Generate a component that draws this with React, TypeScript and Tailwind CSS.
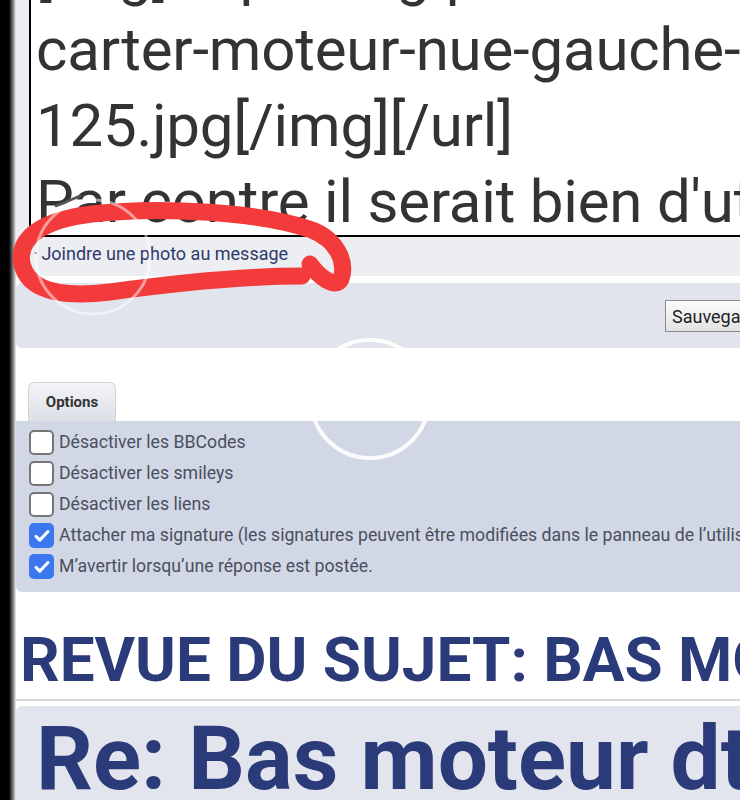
import React from "react";

const options = [
  { label: "Désactiver les BBCodes", checked: false },
  { label: "Désactiver les smileys", checked: false },
  { label: "Désactiver les liens", checked: false },
  {
    label:
      "Attacher ma signature (les signatures peuvent être modifiées dans le panneau de l’utilisateur)",
    checked: true,
  },
  { label: "M’avertir lorsqu’une réponse est postée.", checked: true },
];

function Checkbox({ checked }: { checked: boolean }) {
  if (checked) {
    return (
      <span className="flex h-[25px] w-[25px] shrink-0 items-center justify-center rounded-[5px] bg-[#3b78ef]">
        <svg width="18" height="18" viewBox="0 0 24 24" fill="none">
          <path d="M4 12.5l5 5L20 6" stroke="white" strokeWidth="4" strokeLinecap="round" strokeLinejoin="round" />
        </svg>
      </span>
    );
  }
  return <span className="h-[25px] w-[25px] shrink-0 rounded-[5px] border-2 border-[#767676] bg-white" />;
}

export default function App() {
  return (
    <div className="relative flex h-[800px] w-[740px] overflow-hidden bg-white font-['Roboto',sans-serif]">
      {/* phone edge shadow */}
      <div className="w-[16px] shrink-0 bg-gradient-to-r from-black from-50% to-[#eceef2]" />

      <div className="min-w-0 flex-1">
        {/* message editor */}
        <div className="rounded-bl-md bg-[#eceef2] pl-[13px]">
          <div className="h-[237px] overflow-hidden border-b-2 border-l-2 border-black bg-white pl-[5px] text-[60px] leading-[76px] tracking-[-0.2px] whitespace-nowrap text-[#333]">
            <div className="mt-[-64px]">
              <div>[img]http://img.pieces-dt.fr/upload/</div>
              <div>carter-moteur-nue-gauche-</div>
              <div>125.jpg[/img][/url]</div>
              <div>Par contre il serait bien d'utiliser</div>
            </div>
          </div>
          <div className="flex h-[39px] items-center gap-[4px] pb-[6px] pl-[5px] text-[18px] text-[#2e3a6c]">
            <span className="text-[10px]">•</span>
            <span>Joindre une photo au message</span>
          </div>
        </div>

        <div className="h-[7px]" />

        <div className="h-[65px] rounded-l-md bg-[#e1e4ec] pt-[17px] pl-[649px]">
          <button className="h-[32px] border border-[#8a8a8a] bg-gradient-to-b from-[#fbfbfb] to-[#e3e3e3] pl-[6px] pr-[8px] text-left text-[18px] whitespace-nowrap text-[#222]">
            Sauvegarder
          </button>
        </div>

        <div className="h-[34px]" />

        {/* options tab */}
        <div className="ml-[12px] flex h-[39px] w-[88px] items-center justify-center rounded-t-md border border-b-0 border-[#cfd3dc] bg-gradient-to-b from-[#f4f5f8] to-[#dcdfe7] pt-[1px] text-[15px] font-bold text-[#333]">
          Options
        </div>
        <div className="flex h-[171px] flex-col gap-[6px] rounded-bl-md bg-[#d1d7e5] pt-[9px] pl-[13px]">
          {options.map((o) => (
            <div key={o.label} className="flex items-center gap-[5px] whitespace-nowrap text-[17.7px] leading-[25px] text-[#4a4f5e]">
              <Checkbox checked={o.checked} />
              <span>{o.label}</span>
            </div>
          ))}
        </div>

        {/* topic review */}
        <h2 className="mt-[32px] ml-[4px] text-[62px] leading-[72px] font-bold whitespace-nowrap text-[#2b3a78]">
          REVUE DU SUJET: BAS MOTEUR DT 125
        </h2>
        <div className="mt-[3px] h-[2px] bg-[#d6d8dd]" />
        <div className="mt-[5px] h-[120px] rounded-tl-md bg-[#e2e5ee] pl-[20px]">
          <div className="pt-[3px] text-[89px] leading-[100px] font-bold whitespace-nowrap text-[#2b3a78]">
            Re: Bas moteur dt 125
          </div>
        </div>
      </div>

      {/* annotation + touch indicators */}
      <svg className="pointer-events-none absolute inset-0" width="740" height="800" viewBox="0 0 740 800" fill="none">
        <path d="M56 206 L80 196" stroke="#555" strokeWidth="2.5" strokeLinecap="round" />
        <path
          d="M302 276 C240 276 170 284 110 292 C60 298 28 290 22 264 C17 238 42 220 92 214 C160 206 262 212 312 230 C337 240 347 262 341 279 C336 290 318 276 310 264"
          stroke="#f43b3b"
          strokeWidth="17"
          strokeLinecap="round"
          strokeLinejoin="round"
        />
        <circle cx="93" cy="257" r="57" stroke="white" strokeWidth="3" opacity="0.5" />
        <circle cx="370" cy="399" r="59" stroke="white" strokeWidth="4" opacity="0.9" />
      </svg>
    </div>
  );
}
